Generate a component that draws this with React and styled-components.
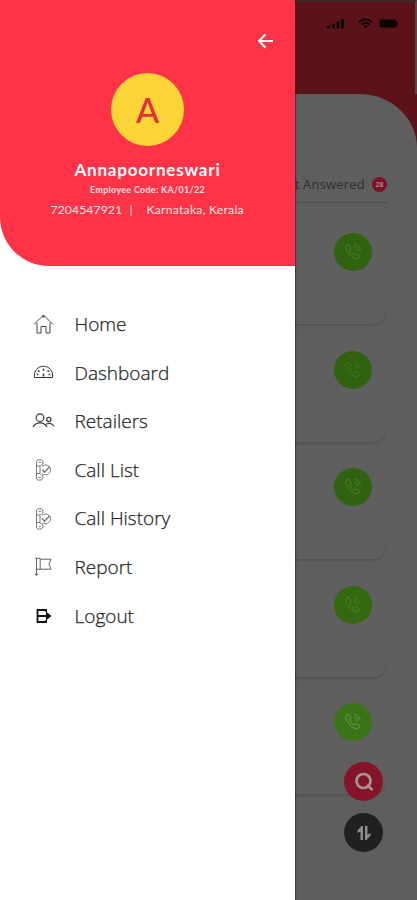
import styled, {createGlobalStyle} from 'styled-components'

const red = '#ff3347'
const dimmed = '#5e5e5e'
const menuFont = '"Open Sans", "Noto Sans", sans-serif'
const titleFont = 'Lato, "Open Sans", sans-serif'

const Global = createGlobalStyle`
    *{box-sizing:border-box;}
    body{margin:0;background:${dimmed};}
`

const Screen = styled.div`
    position: relative;
    width: 417px;
    height: 900px;
    overflow: hidden;
    background: #5b1219;
    font-family: ${menuFont};
`

/* page behind the drawer */
const StatusBar = styled.div`
    height: 94px;
    padding: 16px 17px 0 0;
    border-top: 2px solid #422925;
    border-right: 2px solid #5a4648;
    display: flex;
    justify-content: flex-end;
    align-items: flex-start;
`

const Sheet = styled.main`
    height: 806px;
    padding: 79px 32px 0 0;
    background: ${dimmed};
    border-top-right-radius: 58px 54px;
`

const Tab = styled.div`
    height: 30px;
    padding-right: 1px;
    border-bottom: 1px solid #4e4e4e;
    margin-right: -3px;
    display: flex;
    justify-content: flex-end;
    align-items: flex-start;
    gap: 7px;
    font-size: 13px;
    line-height: 22px;
    letter-spacing: .2px;
    color: #303030;
`

const Count = styled.span`
    width: 15px;
    height: 15px;
    margin-top: 4px;
    border-radius: 50%;
    background: #7c1228;
    color: #a8848b;
    font-size: 7px;
    font-weight: 700;
    line-height: 15px;
    letter-spacing: 0;
    text-align: center;
`

const Cards = styled.div`
    padding-top: 15px;
    display: flex;
    flex-direction: column;
    gap: 11.6px;
`

const Card = styled.div`
    height: 106px;
    flex: none;
    padding: 15px 13px 0 0;
    border-radius: 12px;
    background: #5f5f5f;
    box-shadow: 0 1.5px 2px rgba(0,0,0,.13);
    display: flex;
    justify-content: flex-end;
`

const Round = styled.div`
    width: ${props => props.$size}px;
    height: ${props => props.$size}px;
    border-radius: 50%;
    background: ${props => props.$bg};
    display: flex;
    align-items: center;
    justify-content: center;
`

const Floating = styled.div`
    position: absolute;
    right: 34px;
    top: 762px;
    display: flex;
    flex-direction: column;
    gap: 12px;
`

/* drawer */
const Drawer = styled.aside`
    position: absolute;
    top: 0;
    left: 0;
    width: 295px;
    height: 900px;
    background: #fff;
    box-shadow: 1px 0 1px rgba(0,0,0,.35);
`

const Profile = styled.header`
    height: 266px;
    padding-top: 33px;
    border-bottom-left-radius: 49px;
    background: ${red};
    color: #fff;
    display: flex;
    flex-direction: column;
    align-items: center;
    white-space: pre;
`

const Back = styled.div`
    height: 16px;
    align-self: flex-end;
    margin-right: 21px;
    display: flex;
`

const Avatar = styled.div`
    width: 73px;
    height: 73px;
    margin-top: 24px;
    border-radius: 50%;
    background: #fbd437;
    color: #e22f3d;
    font: 500 34px/73px ${titleFont};
    text-align: center;
`

const Name = styled.div`
    margin-top: 13px;
    font: 700 17px/22px ${titleFont};
    letter-spacing: .8px;
`

const Code = styled.div`
    margin-top: 3px;
    font: 700 8.8px/12px ${titleFont};
    letter-spacing: .38px;
    color: #ffe0e3;
`

const Contact = styled.div`
    margin-top: 5px;
    font: 400 12.2px/18px ${titleFont};
    display: flex;
    color: #ffe3e6;
`

const Phone = styled.span`
    width: 79px;
    letter-spacing: .1px;
`

const Place = styled.span`
    width: 98px;
    letter-spacing: .24px;
`

const Bar = styled.span`
    width: 17px;
`

const Menu = styled.nav`
    padding: 34px 0 0 32px;
`

const Item = styled.div`
    height: 48.6px;
    display: flex;
    align-items: flex-start;
    gap: 19.5px;
    font-size: 19px;
    font-weight: 300;
    line-height: 48.6px;
    color: #262626;
    -webkit-text-stroke: .25px #262626;
    svg{flex:none;margin-top:12.3px;}
`

const icons = {
    home: <>
        <path d="M2 12.5 11.5 3 21 12.5" />
        <path d="M5 11v10h4v-6.5h5V21h4V11" />
        <path d="M10.5 4.5h2" strokeWidth="2" />
    </>,
    dashboard: <>
        <path d="M2.5 16.5C1.7 9.5 6 5.3 11.5 5.3s9.8 4.2 9 11.2z" />
        <path d="M11.5 7.8v2M11.5 12.5v3M6 9.5l1.5 1.2M17 9.5l-1.5 1.2M4.8 13.5h1.6M18.2 13.5h-1.6" strokeWidth="1.5" />
    </>,
    retailers: <>
        <circle cx="8" cy="8.7" r="3.8" strokeWidth="1.2" />
        <circle cx="16.8" cy="10.5" r="2.1" strokeWidth="1.3" />
        <path d="M1 18c1.5-3 4-4.2 7-4.2s5.5 1.2 7 4.2M14.2 15.2c3.3-1.4 6.100-.5 7.800 2" strokeWidth="1.2" />
    </>,
    calls: <>
        <path d="M4.5 5.5C4 2.800 5 1.700 7.500 1.700s3.700 1 3.400 4.300C10 7 8.500 7 8 8.300v7.200c.4 1.300 2 1.300 2.900 2.300.3 3.300-.9 4.400-3.400 4.400s-3.500-1.100-3-3.800z" />
        <path d="M6.500 5c0-1.200 2.400-1.200 2.400 0M6.500 18.800c0 1.300 2.400 1.300 2.400 0M4.500 8H8M4.500 15.500H8M4.500 5.500v13M10 8.500c2-1.900 5-2 7-.3M10.300 15.700c3.500 2.600 8.300.1 8.300-3.900 0-1.300-.6-2.700-1.600-3.600" />
        <path d="m10 11.500 2.500 2.700L17.500 9" strokeWidth="1.400" />
    </>,
    report: <>
        <path d="M4.500 3v17.500M3.200 3.300h5v11H4.500M8.200 4.200H19l-2 5 2 5H8.200" />
        <path d="M3 19.500h3" strokeWidth="1.500" />
    </>,
    logout: <>
        <path d="M14 8V6H5.500v12H14v-2" strokeWidth="1.800" />
        <path d="M5.500 12H16" strokeWidth="2" />
        <path d="m14 7.500 5.500 4.500-5.500 4.500z" fill="#111" stroke="none" />
    </>
}

const iconColors = {
    home: '#444',
    dashboard: '#333',
    retailers: '#3c3c3c',
    calls: '#777',
    report: '#666',
    logout: '#111'
}

const MenuIcon = ({name}) => (
    <svg width="23" height="24" viewBox="0 0 23 24" fill="none" stroke={iconColors[name]} strokeWidth="1">
        {icons[name]}
    </svg>
)

const CallIcon = ({color}) => (
    <svg width="20" height="20" viewBox="0 0 20 20" fill="none" stroke={color} strokeWidth="1">
        <path d="M5 2 3 4c-1.500 4 5.500 12.500 11 13l3-2.300-3.500-3-2.300 1.400C8.500 11.500 7.400 9.800 6.700 7.300l1.500-1.500z" />
        <path d="M11 2.500c3.700.2 6 2.500 6.300 6.200M11 5.200c2.200.2 3.400 1.400 3.600 3.600" />
    </svg>
)

const items = [
    ['home', 'Home'],
    ['dashboard', 'Dashboard'],
    ['retailers', 'Retailers'],
    ['calls', 'Call List'],
    ['calls', 'Call History'],
    ['report', 'Report'],
    ['logout', 'Logout']
]

const cards = [
    {bg: '#30620f', line: '#527c39'},
    {bg: '#30620f', line: '#456f2d'},
    {bg: '#30620f', line: '#527c39'},
    {bg: '#33690f', line: '#527c39'},
    {bg: '#3a7417', line: '#699b4d'}
]

export default function App() {
    return (
        <>
            <Global />
            <Screen>
                <StatusBar>
                    <svg width="72" height="12" viewBox="0 0 72 12" fill="#0b0204">
                        <rect x="1" y="7.500" width="3" height="3" rx="1" />
                        <rect x="6" y="5.500" width="3" height="5" rx="1" />
                        <rect x="10.500" y="3.500" width="3" height="7" rx="1" />
                        <rect x="15" y="1" width="3" height="9.500" rx="1" />
                        <path d="M33 4c4-3.600 9.500-3.600 13 0M35.500 6.500c2.500-2.100 5.500-2.100 8 0" fill="none" stroke="#0b0204" strokeWidth="1.700" />
                        <path d="m37.200 8 2.300 2.500L41.800 8c-1.500-1-3.100-1-4.600 0z" />
                        <rect x="53.500" y="1.500" width="17" height="8" rx="2" />
                        <rect x="71" y="4" width="1" height="3" />
                    </svg>
                </StatusBar>
                <Sheet>
                    <Tab>Not Answered <Count>28</Count></Tab>
                    <Cards>
                        {cards.map((card, i) => (
                            <Card key={i}>
                                <Round $size={38} $bg={card.bg}><CallIcon color={card.line} /></Round>
                            </Card>
                        ))}
                    </Cards>
                </Sheet>
                <Floating>
                    <Round $size={39} $bg="#85142a">
                        <svg width="22" height="22" viewBox="0 0 22 22" fill="none" stroke="#a5958f" strokeWidth="2.700">
                            <circle cx="10.500" cy="10" r="7" />
                            <path d="m14 14 5.500 5" />
                        </svg>
                    </Round>
                    <Round $size={39} $bg="#202020">
                        <svg width="16" height="16" viewBox="0 0 16 16" fill="#8c8c8c">
                            <path d="M7 1v14H4.500V6.500L1.500 8V5.500L5.500 1zM9 1h2.500v8.800l3-1.800v2.500L10.500 15H9z" />
                        </svg>
                    </Round>
                </Floating>
                <Drawer>
                    <Profile>
                        <Back>
                            <svg width="17" height="16" viewBox="0 0 17 16" fill="none" stroke="#fff" strokeWidth="2">
                                <path d="M16 8H2M8.500 1.300 2 8l6.500 6.700" />
                            </svg>
                        </Back>
                        <Avatar>A</Avatar>
                        <Name>Annapoorneswari</Name>
                        <Code>Employee Code: KA/01/22</Code>
                        <Contact>
                            <Phone>7204547921</Phone>
                            <Bar>|</Bar>
                            <Place>Karnataka, Kerala</Place>
                        </Contact>
                    </Profile>
                    <Menu>
                        {items.map(([icon, label]) => (
                            <Item key={label}>
                                <MenuIcon name={icon} />
                                {label}
                            </Item>
                        ))}
                    </Menu>
                </Drawer>
            </Screen>
        </>
    )
}
